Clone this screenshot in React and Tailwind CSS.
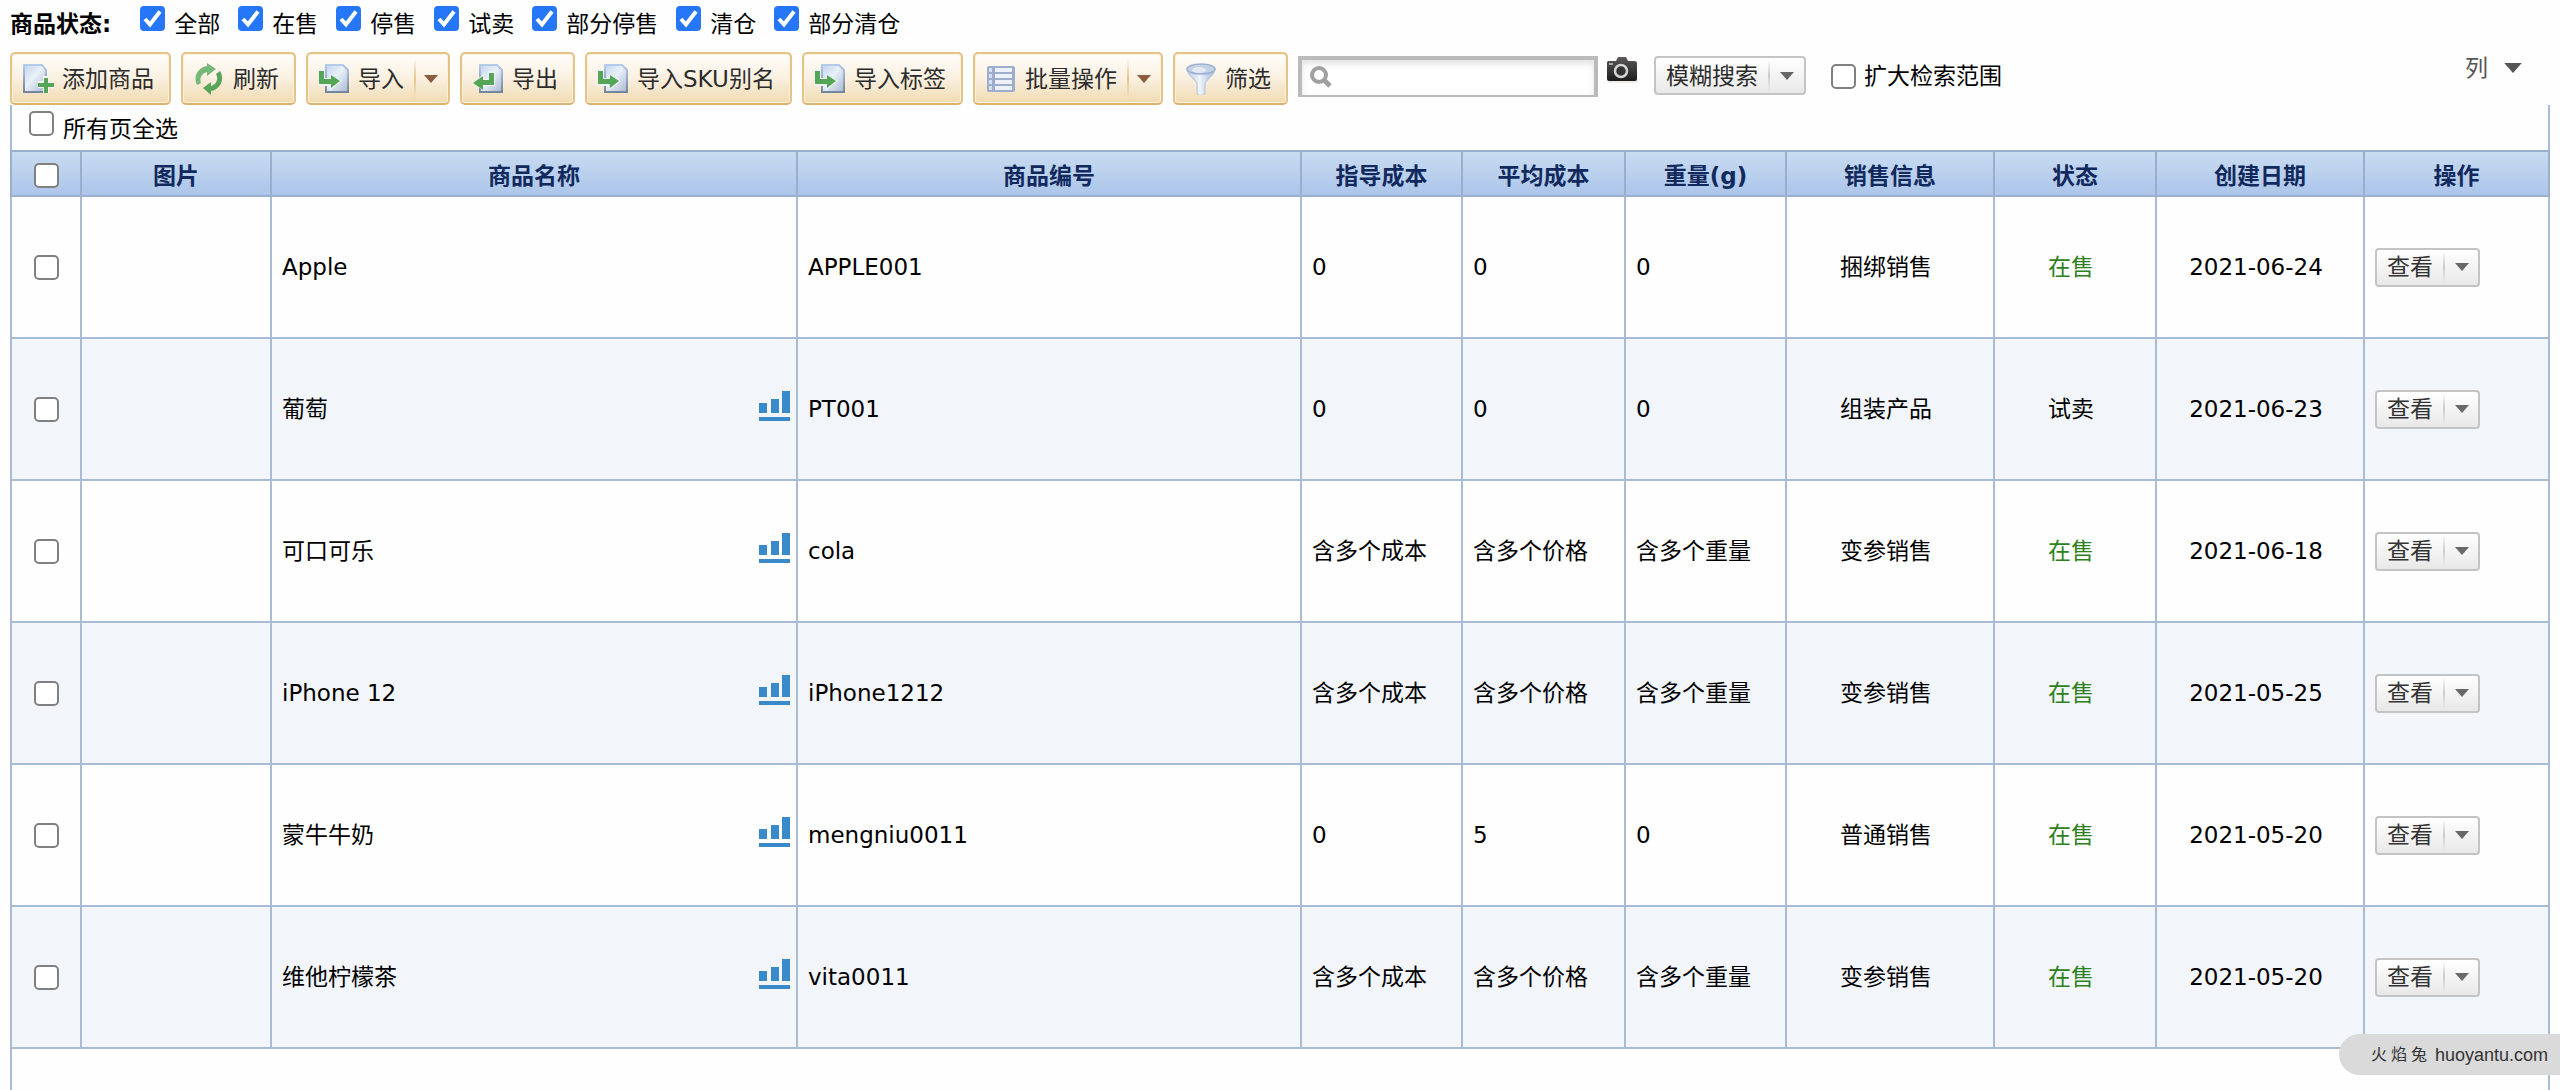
import { useState } from 'react';

const STATUSES = ['全部', '在售', '停售', '试卖', '部分停售', '清仓', '部分清仓'];

const COLUMNS = [
  { title: '图片', width: 'w-[190px]' },
  { title: '商品名称', width: '' },
  { title: '商品编号', width: 'w-[504px]' },
  { title: '指导成本', width: 'w-[161px]' },
  { title: '平均成本', width: 'w-[163px]' },
  { title: '重量(g)', width: 'w-[161px]' },
  { title: '销售信息', width: 'w-[208px]' },
  { title: '状态', width: 'w-[162px]' },
  { title: '创建日期', width: 'w-[208px]' },
  { title: '操作', width: 'w-[185px]' },
];

const PRODUCTS = [
  { name: 'Apple', sku: 'APPLE001', cost: '0', avg: '0', weight: '0', type: '捆绑销售', status: '在售', date: '2021-06-24', chart: false },
  { name: '葡萄', sku: 'PT001', cost: '0', avg: '0', weight: '0', type: '组装产品', status: '试卖', date: '2021-06-23', chart: true },
  { name: '可口可乐', sku: 'cola', cost: '含多个成本', avg: '含多个价格', weight: '含多个重量', type: '变参销售', status: '在售', date: '2021-06-18', chart: true },
  { name: 'iPhone 12', sku: 'iPhone1212', cost: '含多个成本', avg: '含多个价格', weight: '含多个重量', type: '变参销售', status: '在售', date: '2021-05-25', chart: true },
  { name: '蒙牛牛奶', sku: 'mengniu0011', cost: '0', avg: '5', weight: '0', type: '普通销售', status: '在售', date: '2021-05-20', chart: true },
  { name: '维他柠檬茶', sku: 'vita0011', cost: '含多个成本', avg: '含多个价格', weight: '含多个重量', type: '变参销售', status: '在售', date: '2021-05-20', chart: true },
];

// Shared gradients for the toolbar icons
function IconDefs() {
  return (
    <svg className="absolute size-0" aria-hidden="true">
      <defs>
        <linearGradient id="page" x1="0" y1="0" x2="1" y2="1">
          <stop offset="0" stopColor="#c3d5ec" />
          <stop offset="0.45" stopColor="#e9f0f8" />
          <stop offset="1" stopColor="#a9b8cf" />
        </linearGradient>
        <linearGradient id="pageEdge" x1="0" y1="0" x2="0" y2="1">
          <stop offset="0" stopColor="#b4cbea" />
          <stop offset="1" stopColor="#76859f" />
        </linearGradient>
        <linearGradient id="funnel" x1="0" y1="0" x2="1" y2="0">
          <stop offset="0" stopColor="#b3c6e2" />
          <stop offset="0.45" stopColor="#f0f5fb" />
          <stop offset="1" stopColor="#9fb4d4" />
        </linearGradient>
        <linearGradient id="camera" x1="0" y1="0" x2="0" y2="1">
          <stop offset="0" stopColor="#5c5a5b" />
          <stop offset="1" stopColor="#1e1b1c" />
        </linearGradient>
      </defs>
    </svg>
  );
}

function AddIcon() {
  return (
    <svg className="size-8" viewBox="0 0 32 32" aria-hidden="true">
      <path d="M2 2h18l4 5v22H2z" fill="url(#page)" stroke="url(#pageEdge)" strokeWidth="2" />
      <path d="M21 13h6v5h5v7h-5v5h-6v-5h-5v-7h5z" fill="#f6f3ea" />
      <path d="M22 15h4v5h6v4h-6v6h-4v-6h-6v-4h6z" fill="#55a557" />
    </svg>
  );
}

function RefreshIcon() {
  return (
    <svg className="size-8" viewBox="0 0 32 32" aria-hidden="true">
      <path d="M4 22A13 13 0 0 1 14 3V0l9 6-9 7V9a8 8 0 0 0-6 11z" fill="#76b77a" />
      <path d="M27 8a13 13 0 0 1-9 20v4l-8-7 8-6v4a8 8 0 0 0 5-12z" fill="#57a55a" />
    </svg>
  );
}

function ImportIcon() {
  return (
    <svg className="size-8" viewBox="0 0 32 32" aria-hidden="true">
      <path d="M8 2h17l5 5v22H8z" fill="url(#page)" stroke="url(#pageEdge)" strokeWidth="2" />
      <path d="M0 6h7v9h5v-4l12 7-12 9v-4H0z" fill="#eef3f6" />
      <path d="M1 8h5v8h7v-4l9 6-9 7v-4H1z" fill="#55a557" />
    </svg>
  );
}

function ExportIcon() {
  return (
    <svg className="size-8" viewBox="0 0 32 32" aria-hidden="true">
      <path d="M8 2h17l5 5v22H8z" fill="url(#page)" stroke="url(#pageEdge)" strokeWidth="2" />
      <path d="M23 8v15h-11v5L0 20l12-9v5h4V8z" fill="#eef3f6" />
      <path d="M22 10v12H11v5L1 20l10-7v4h6v-7z" fill="#55a557" />
    </svg>
  );
}

function ListIcon() {
  return (
    <svg className="size-8" viewBox="0 0 32 32" aria-hidden="true">
      <rect x="2" y="3" width="28" height="26" rx="2" fill="#9dadcb" />
      <path d="M4 5h3v4H4zM4 11h3v4H4zM4 17h3v4H4zM4 23h3v4H4z" fill="#d5e1f3" />
      <path d="M10 5h17v4H10zM10 11h17v4H10zM10 17h17v4H10zM10 23h17v4H10z" fill="#edf2fa" />
    </svg>
  );
}

function FilterIcon() {
  return (
    <svg className="size-8" viewBox="0 0 32 32" aria-hidden="true">
      <path d="M2 6c0 5 6 9 10 14v10c0 3 8 3 8 0V20c4-5 10-9 10-14z" fill="url(#funnel)" stroke="#b2c3dd" />
      <ellipse cx="16" cy="6" rx="14" ry="5" fill="#c5d2e6" stroke="#9bb0d0" strokeWidth="1.5" />
      <ellipse cx="14" cy="7" rx="7" ry="3" fill="#e3eaf4" />
    </svg>
  );
}

function CameraIcon() {
  return (
    <svg className="h-7 w-8" viewBox="0 0 32 28" aria-hidden="true">
      <rect x="2" y="23" width="30" height="4" fill="#f0eee9" />
      <path d="M2 5h8l2-4h8l2 4h6q3 0 3 2v16q0 2-2 2H3q-2 0-2-2V6z" fill="url(#camera)" />
      <circle cx="15" cy="15" r="6" fill="#333" stroke="#d3d3d3" strokeWidth="2.5" />
      <rect x="3" y="7" width="4" height="2" fill="#aaa" />
    </svg>
  );
}

function ChartIcon() {
  return (
    <svg className="block h-[31px] w-[31px]" viewBox="0 0 31 31" aria-hidden="true">
      <path d="M0 12h8v10H0zM12 8h8v14h-8zM23 0h8v22h-8zM0 26h31v4H0z" fill="#3a89c9" />
    </svg>
  );
}

function Caret({ className }) {
  return (
    <svg className={className} viewBox="0 0 14 8" aria-hidden="true">
      <path d="M0 0h14L7 8z" fill="currentColor" />
    </svg>
  );
}

function CheckBox({ checked, ...props }) {
  return (
    <span className="grid size-[25px] shrink-0">
      <input
        type="checkbox"
        defaultChecked={checked}
        className="peer col-start-1 row-start-1 size-[25px] appearance-none rounded-[5px] border-2 border-[#808080] bg-white checked:rounded-[4px] checked:border-[#2676f8] checked:bg-[#2676f8]"
        {...props}
      />
      <svg className="pointer-events-none invisible col-start-1 row-start-1 size-[25px] peer-checked:visible" viewBox="0 0 25 25" aria-hidden="true">
        <path d="M5 13l5 5.500L20 5.500" fill="none" stroke="#fff" strokeWidth="4" />
      </svg>
    </span>
  );
}

function ToolButton({ icon, children, menu }) {
  return (
    <button
      type="button"
      className={`flex h-[53px] items-center rounded-[5px] border-2 border-[#e5c285] border-b-[#dcb270] bg-linear-to-b from-[#fffdfb] via-[#faf0e0] to-[#f0dab0] pl-[10px] text-[#2b2b2b] inset-ring inset-ring-[#fbf1dd] ${menu ? 'pr-[10px]' : 'pr-[15px]'}`}
    >
      {icon}
      <span className="ml-2 whitespace-nowrap">{children}</span>
      {menu && (
        <>
          <span className="ml-2.5 h-10 w-0.5 bg-linear-to-b from-transparent via-[#e5c48c] to-transparent" />
          <Caret className="ml-2 h-2 w-3.5 text-[#8d5b3d]" />
        </>
      )}
    </button>
  );
}

function ViewButton() {
  return (
    <button
      type="button"
      className="flex h-[39px] items-center rounded-[4px] border-2 border-[#c4c4c4] bg-linear-to-b from-white to-[#e8e8e8] pr-[9px] pl-[10px] text-[#333]"
    >
      <span className="leading-8">查看</span>
      <span className="ml-[10px] h-8 w-0.5 bg-linear-to-b from-transparent via-[#cccccc] to-transparent" />
      <Caret className="ml-[10px] h-2 w-3.5 text-[#686868]" />
    </button>
  );
}

function SearchMode() {
  return (
    <div className="grid h-[39px] w-[152px]">
      <select
        aria-label="搜索方式"
        className="col-start-1 row-start-1 appearance-none rounded-[4px] border-2 border-[#c4c4c4] bg-linear-to-b from-white to-[#e8e8e8] pl-[10px] text-[#2b2b2b]"
      >
        <option>模糊搜索</option>
        <option>精确搜索</option>
      </select>
      <div className="pointer-events-none col-start-1 row-start-1 flex items-center justify-end pr-3">
        <span className="h-8 w-0.5 bg-linear-to-b from-transparent via-[#cccccc] to-transparent" />
        <Caret className="ml-2.5 h-2 w-3.5 text-[#686868]" />
      </div>
    </div>
  );
}

function Toolbar() {
  const [keyword, setKeyword] = useState('');

  return (
    <div className="flex items-start gap-2.5">
      <ToolButton icon={<AddIcon />}>添加商品</ToolButton>
      <ToolButton icon={<RefreshIcon />}>刷新</ToolButton>
      <ToolButton icon={<ImportIcon />} menu>导入</ToolButton>
      <ToolButton icon={<ExportIcon />}>导出</ToolButton>
      <ToolButton icon={<ImportIcon />}>导入SKU别名</ToolButton>
      <ToolButton icon={<ImportIcon />}>导入标签</ToolButton>
      <ToolButton icon={<ListIcon />} menu>批量操作</ToolButton>
      <ToolButton icon={<FilterIcon />}>筛选</ToolButton>

      <div className="flex flex-1 items-start pt-1">
        <div className="grid h-[41px] w-[300px]">
          <input
            type="text"
            aria-label="搜索"
            value={keyword}
            onChange={(e) => setKeyword(e.target.value)}
            className="col-start-1 row-start-1 min-w-0 border-4 border-b-2 border-[#bababa] bg-white pr-2 pl-9 inset-shadow-[0_4px_6px_#e2e2e2] outline-none"
          />
          <svg className="pointer-events-none col-start-1 row-start-1 ml-3 size-[22px] self-center" viewBox="0 0 22 22" aria-hidden="true">
            <circle cx="9" cy="9" r="7" fill="none" stroke="#a0a0a0" strokeWidth="4" />
            <path d="M14 14l6 6" stroke="#a0a0a0" strokeWidth="5" />
          </svg>
        </div>
        <button type="button" aria-label="图片搜索" className="mr-4 ml-2">
          <CameraIcon />
        </button>
        <SearchMode />
        <label className="ml-[25px] flex items-start gap-2 pt-2">
          <CheckBox />
          <span className="leading-6">扩大检索范围</span>
        </label>
        <button type="button" className="mr-7 ml-auto flex items-center gap-4 leading-6 text-[#555]">
          列
          <Caret className="h-2.5 w-[18px]" />
        </button>
      </div>
    </div>
  );
}

function ProductRow({ product }) {
  return (
    <tr className="h-[142px] even:bg-[#f2f5fa] *:border-2 *:border-[#a9bcd5]">
      <td>
        <div className="flex justify-center">
          <CheckBox aria-label={product.name} />
        </div>
      </td>
      <td />
      <td className="pr-1.5 pl-2.5">
        <div className="flex items-center justify-between">
          {product.name}
          {product.chart && (
            <a href="#chart" aria-label="销售统计" className="pb-1.5">
              <ChartIcon />
            </a>
          )}
        </div>
      </td>
      <td className="pl-2.5">{product.sku}</td>
      <td className="pl-2.5">{product.cost}</td>
      <td className="pl-2.5">{product.avg}</td>
      <td className="pl-2.5">{product.weight}</td>
      <td className="pr-2 text-center">{product.type}</td>
      <td className={`pr-2 text-center ${product.status === '在售' ? 'text-[#2e8120]' : ''}`}>{product.status}</td>
      <td className="pr-2 text-center">{product.date}</td>
      <td className="pl-2.5">
        <ViewButton />
      </td>
    </tr>
  );
}

export default function App() {
  return (
    <div className="relative flex min-h-screen flex-col bg-[#fefefe] pr-2.5 pl-2.5 font-['DejaVu_Sans','Noto_Sans_CJK_SC',sans-serif] text-[23px] leading-8 text-black">
      <IconDefs />

      {/* Status filter */}
      <fieldset className="flex items-start gap-[18px] pt-1.5 pb-2.5 leading-9">
        <legend className="float-left mr-[11px] font-bold">商品状态:</legend>
        {STATUSES.map((status) => (
          <label key={status} className="flex items-start gap-[9px]">
            <CheckBox checked />
            {status}
          </label>
        ))}
      </fieldset>

      <Toolbar />

      {/* Product list */}
      <div className="flex-1 border-x-2 border-[#a9bcd5]">
        <label className="flex h-[45px] items-start gap-[9px] pt-1.5 pl-[17px] leading-9">
          <CheckBox />
          所有页全选
        </label>
        <div className="-mx-0.5">
          <table className="w-full table-fixed border-collapse">
            <thead>
              <tr className="h-[45px] bg-linear-to-b from-[#c9dcf1] to-[#abc5ea] text-[#11295c] *:border-2 *:border-[#9aafcd]">
                <th className="w-[70px] pt-1">
                  <div className="flex justify-center">
                    <CheckBox aria-label="全选" />
                  </div>
                </th>
                {COLUMNS.map((col) => (
                  <th key={col.title} className={`pt-1 font-bold ${col.width}`}>{col.title}</th>
                ))}
              </tr>
            </thead>
            <tbody>
              {PRODUCTS.map((product) => (
                <ProductRow key={product.sku} product={product} />
              ))}
            </tbody>
          </table>
        </div>
      </div>

      {/* Corner badge */}
      <div className="absolute right-0 bottom-[15px] flex h-[41px] items-center gap-2 rounded-l-full bg-[#dadada] pr-3 pl-8 font-['Liberation_Sans','Noto_Sans_CJK_SC',sans-serif] text-lg text-[#333]">
        <span className="flex gap-1 text-base">
          <span>火</span>
          <span>焰</span>
          <span>兔</span>
        </span>
        huoyantu.com
      </div>
    </div>
  );
}
